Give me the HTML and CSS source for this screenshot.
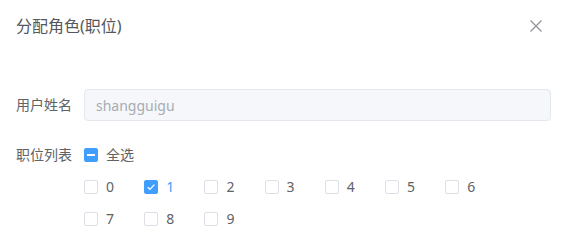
FILE: index.html
```html
<!DOCTYPE html>
<html lang="zh">
<head>
<meta charset="utf-8">
<title>分配角色(职位)</title>
<link rel="stylesheet" href="styles.css">
</head>
<body>
<div class="dialog">
  <header class="dialog-header">
    <span class="dialog-title">分配角色(职位)</span>
    <button class="close-btn" type="button" aria-label="Close">
      <svg width="12" height="12" viewBox="0 0 12 12"><path d="M0.5 0.5 L11.5 11.5 M11.5 0.5 L0.5 11.5" stroke="#909399" stroke-width="1.3" fill="none"/></svg>
    </button>
  </header>
  <div class="dialog-body">
    <form class="form">
      <div class="form-item">
        <label class="form-label">用户姓名</label>
        <div class="form-content">
          <div class="input is-disabled"><input type="text" placeholder="shangguigu" disabled></div>
        </div>
      </div>
      <div class="form-item">
        <label class="form-label">职位列表</label>
        <div class="form-content col">
          <label class="checkbox"><span class="box indeterminate"></span><span class="cb-label">全选</span></label>
          <div class="checkbox-group">
            <label class="checkbox"><span class="box"></span><span class="cb-label num">0</span></label>
            <label class="checkbox checked"><span class="box checked"><svg width="14" height="14" viewBox="0 0 14 14"><path d="M3.6 7.1 L5.9 9.3 L10.4 4.6" stroke="#fff" stroke-width="1.2" fill="none"/></svg></span><span class="cb-label num">1</span></label>
            <label class="checkbox"><span class="box"></span><span class="cb-label num">2</span></label>
            <label class="checkbox"><span class="box"></span><span class="cb-label num">3</span></label>
            <label class="checkbox"><span class="box"></span><span class="cb-label num">4</span></label>
            <label class="checkbox"><span class="box"></span><span class="cb-label num">5</span></label>
            <label class="checkbox"><span class="box"></span><span class="cb-label num">6</span></label>
            <label class="checkbox"><span class="box"></span><span class="cb-label num">7</span></label>
            <label class="checkbox"><span class="box"></span><span class="cb-label num">8</span></label>
            <label class="checkbox"><span class="box"></span><span class="cb-label num">9</span></label>
          </div>
        </div>
      </div>
    </form>
  </div>
</div>
</body>
</html>
```

FILE: styles.css
```css
* { box-sizing: border-box; }
html, body { margin: 0; padding: 0; background: #fff; }
body {
  font-family: "Noto Sans", "Noto Sans CJK SC", sans-serif;
  color: #606266;
  font-size: 14px;
}
.dialog { width: 567px; }
.dialog-header {
  display: flex;
  align-items: center;
  justify-content: space-between;
  padding: 15px 25px 0 16px;
}
.dialog-title {
  font-size: 16px;
  line-height: 22px;
  color: #55575c;
}
.close-btn {
  border: 0;
  background: none;
  padding: 0;
  width: 12px;
  height: 12px;
  display: flex;
  cursor: pointer;
}
.dialog-body { padding: 52px 16px 0 16px; }
.form-item { display: flex; margin-bottom: 18px; }
.form-label {
  width: 68px;
  padding-right: 12px;
  flex: none;
  line-height: 32px;
  height: 32px;
  color: #606266;
}
.form-content { flex: 1; min-width: 0; }
.form-content.col { display: flex; flex-direction: column; }
.input {
  height: 32px;
  border: 1px solid #e4e7ed;
  border-radius: 4px;
  background: #f5f7fa;
  padding: 0 11px;
  display: flex;
  align-items: center;
}
.input input {
  border: 0;
  background: transparent;
  outline: none;
  width: 100%;
  font: inherit;
  font-size: 14px;
  padding: 0;
}
.input input::placeholder { color: #a8abb2; }
.checkbox {
  display: inline-flex;
  align-items: center;
  height: 32px;
  margin-right: 30px;
  cursor: pointer;
  align-self: flex-start;
}
.checkbox-group { display: flex; flex-wrap: wrap; }
.box {
  width: 14px;
  height: 14px;
  border: 1px solid #dcdfe6;
  border-radius: 2px;
  background: #fff;
  position: relative;
  flex: none;
}
.box.checked, .box.indeterminate {
  background: #409eff;
  border-color: #409eff;
}
.box.checked svg { position: absolute; left: -1px; top: -1px; }
.box.indeterminate::after {
  content: "";
  position: absolute;
  left: 2px;
  right: 2px;
  top: 5px;
  height: 2px;
  background: #fff;
}
.cb-label {
  padding-left: 8px;
  line-height: 1;
  color: #606266;
}
.cb-label.num { width: 8.2px; box-sizing: content-box; }
.checkbox.checked .cb-label { color: #409eff; }
```
